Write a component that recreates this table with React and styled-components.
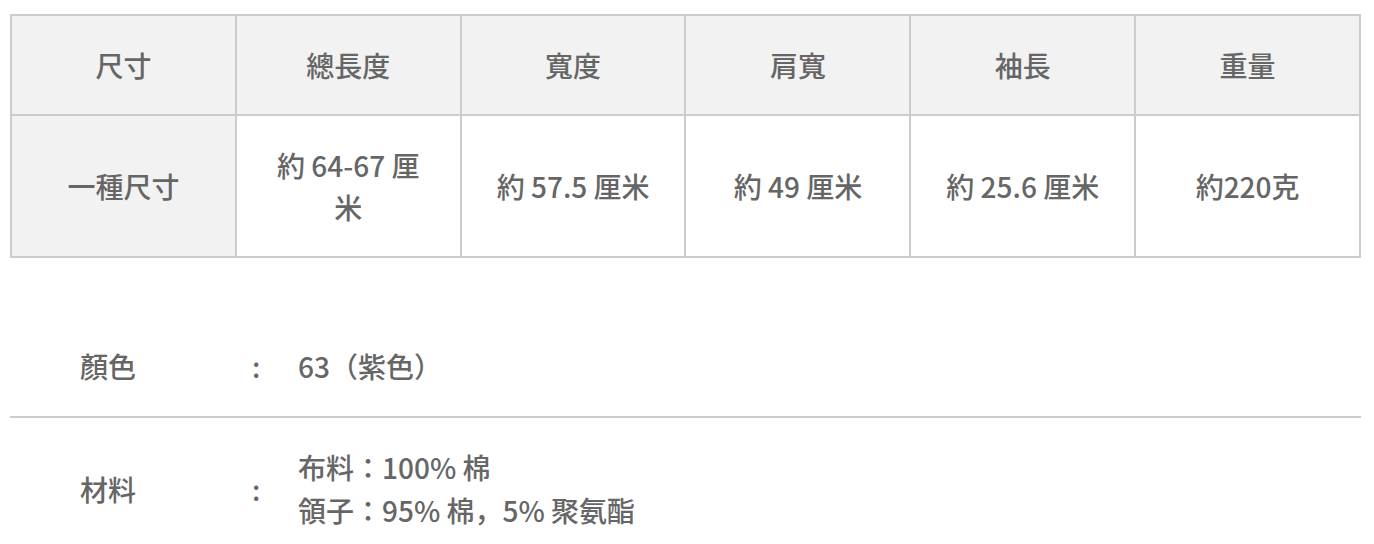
import React from 'react';
import styled, { createGlobalStyle } from 'styled-components';

const GlobalStyle = createGlobalStyle`
  body {
    margin: 0;
    background: #fff;
    font-family: "Noto Sans CJK JP", "Noto Sans CJK TC", "Noto Sans", sans-serif;
    color: #666;
  }
`;

const Page = styled.div`
  padding: 14px 13px 0 10px;
`;

const SizeTable = styled.table`
  width: 1351px;
  border-collapse: collapse;
  table-layout: fixed;
  border: 2px solid #ccc;
`;

const Cell = styled.td`
  border: 2px solid #ccc;
  padding: 28px 32px;
  height: ${(p) => (p.$head ? '42px' : '84px')};
  text-align: center;
  vertical-align: middle;
  font-size: 28px;
  line-height: 42px;
  font-weight: 500;
  color: #666;
  background: ${(p) => (p.$shade ? '#f2f2f2' : '#fff')};
`;

const SpecList = styled.div`
  margin-top: 60px;
`;

const SpecRow = styled.div`
  display: grid;
  grid-template-columns: 172px 46px 1fr;
  align-items: center;
  padding: ${(p) => (p.$first ? '27px 0 28px 70px' : '28px 0 30px 70px')};
  border-bottom: ${(p) => (p.$first ? '2px solid #ccc' : 'none')};
  font-size: 28px;
  line-height: 43px;
  font-weight: 500;
  color: #666;
`;

const Colon = styled.span`
  text-align: left;
`;

const Lines = styled.div`
  display: flex;
  flex-direction: column;
`;

const headers = ['尺寸', '總長度', '寬度', '肩寬', '袖長', '重量'];
const values = ['約 64-67 厘米', '約 57.5 厘米', '約 49 厘米', '約 25.6 厘米', '約220克'];

export default function App() {
  return (
    <Page>
      <GlobalStyle />
      <SizeTable>
        <tbody>
          <tr>
            {headers.map((h) => (
              <Cell as="th" key={h} $head $shade>
                {h}
              </Cell>
            ))}
          </tr>
          <tr>
            <Cell as="th" $shade>一種尺寸</Cell>
            {values.map((v) => (
              <Cell key={v}>{v}</Cell>
            ))}
          </tr>
        </tbody>
      </SizeTable>
      <SpecList>
        <SpecRow $first>
          <span>顏色</span>
          <Colon>:</Colon>
          <span>63（紫色）</span>
        </SpecRow>
        <SpecRow>
          <span>材料</span>
          <Colon>:</Colon>
          <Lines>
            <span>布料：100% 棉</span>
            <span>領子：95% 棉，5% 聚氨酯</span>
          </Lines>
        </SpecRow>
      </SpecList>
    </Page>
  );
}
